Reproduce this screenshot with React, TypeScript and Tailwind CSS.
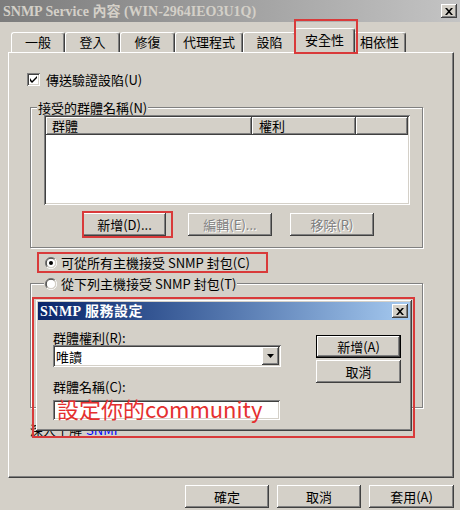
import React from "react";

const raised =
  "shadow-[inset_-1px_-1px_#404040,inset_1px_1px_#ffffff,inset_-2px_-2px_#808080,inset_2px_2px_#d4d0c8]";
const sunken =
  "shadow-[inset_1px_1px_#808080,inset_-1px_-1px_#ffffff,inset_2px_2px_#404040,inset_-2px_-2px_#d4d0c8]";

function Btn({
  children,
  className = "",
  disabled = false,
  isDefault = false,
}: {
  children: React.ReactNode;
  className?: string;
  disabled?: boolean;
  isDefault?: boolean;
}) {
  return (
    <div
      className={`flex items-center justify-center bg-[#d4d0c8] ${
        isDefault
          ? "border border-black shadow-[inset_-1px_-1px_#404040,inset_1px_1px_#ffffff,inset_-2px_-2px_#808080,inset_2px_2px_#d4d0c8]"
          : raised
      } ${disabled ? "text-[#808080] [text-shadow:1px_1px_#ffffff]" : "text-black"} ${className}`}
    >
      {children}
    </div>
  );
}

function Tab({ label, w, selected = false }: { label: string; w: string; selected?: boolean }) {
  if (selected) {
    return (
      <div
        className={`relative z-10 -mx-[2px] -mb-[1px] flex h-[25px] items-start justify-center rounded-t-[3px] border-l border-t border-r border-l-white border-t-white border-r-[#404040] bg-[#d4d0c8] pt-[3px] shadow-[inset_-1px_0_#808080] ${w}`}
      >
        {label}
      </div>
    );
  }
  return (
    <div
      className={`flex h-[20px] items-start justify-center rounded-t-[3px] border-l border-t border-r border-l-white border-t-white border-r-[#404040] pt-[1px] shadow-[inset_-1px_0_#808080] ${w}`}
    >
      {label}
    </div>
  );
}

function Radio({ checked }: { checked: boolean }) {
  return (
    <svg width="12" height="12" viewBox="0 0 12 12" className="shrink-0">
      <path d="M10 2 A5.5 5.5 0 0 0 2 10" stroke="#808080" fill="none" />
      <path d="M9.4 2.6 A4.5 4.5 0 0 0 2.6 9.4" stroke="#404040" fill="none" />
      <circle cx="6" cy="6" r="4" fill="#ffffff" />
      <path d="M2 10 A5.5 5.5 0 0 0 10 2" stroke="#ffffff" fill="none" />
      <path d="M2.6 9.4 A4.5 4.5 0 0 0 9.4 2.6" stroke="#d4d0c8" fill="none" />
      {checked && <circle cx="6" cy="6" r="2" fill="#000000" />}
    </svg>
  );
}

function CloseX() {
  return (
    <svg width="8" height="7" viewBox="0 0 8 7">
      <path d="M0 0h2l2 2.2L6 0h2L5 3.5 8 7H6L4 4.8 2 7H0l3-3.5z" fill="#000" />
    </svg>
  );
}

export default function App() {
  return (
    <div
      className="relative h-[510px] w-[460px] overflow-hidden bg-[#d4d0c8] text-[13px] leading-[15px] text-black"
      style={{ fontFamily: '"Noto Sans CJK TC", "Noto Sans", sans-serif' }}
    >
      {/* Title bar */}
      <div className="flex h-[22px] items-center justify-between bg-gradient-to-r from-[#7c7c7c] to-[#c4c4c4] pl-[3px] pr-[3px]">
        <span
          className="text-[14px] font-bold text-[#d4d0c8]"
          style={{ fontFamily: '"Liberation Serif", "Noto Sans CJK TC", serif' }}
        >
          SNMP Service 內容 (WIN-2964IEO3U1Q)
        </span>
        <div className={`flex h-[14px] w-[16px] items-center justify-center bg-[#d4d0c8] ${raised}`}>
          <CloseX />
        </div>
      </div>

      {/* Tabs */}
      <div className="mt-[6px] flex h-[24px] items-end pl-[11px]">
        <Tab label="一般" w="w-[54px]" />
        <Tab label="登入" w="w-[55px]" />
        <Tab label="修復" w="w-[55px]" />
        <Tab label="代理程式" w="w-[68px]" />
        <Tab label="設陷" w="w-[53px]" />
        <Tab label="安全性" w="w-[61px]" selected />
        <Tab label="相依性" w="w-[53px]" />
      </div>

      {/* Panel */}
      <div className="ml-[8px] h-[426px] w-[446px] border-b border-l border-r border-t border-b-[#404040] border-l-white border-r-[#404040] border-t-white shadow-[inset_-1px_-1px_#808080]">
        {/* checkbox */}
        <div className="ml-[18px] mt-[19px] flex h-[15px] items-center gap-[6px]">
          <div className={`flex h-[13px] w-[13px] items-center justify-center bg-white ${sunken}`}>
            <svg width="7" height="7" viewBox="0 0 7 7">
              <path d="M0 2v3l2 2 5-5V-0L2 5z" fill="#000" />
            </svg>
          </div>
          <span>傳送驗證設陷(U)</span>
        </div>

        {/* Group 1 */}
        <div className="ml-[21px] mt-[20px] h-[141px] w-[393px] border border-[#808080] shadow-[inset_1px_1px_#ffffff,1px_1px_#ffffff]">
          <div className="-mt-[8px] ml-[6px] w-fit bg-[#d4d0c8] px-[1px]">接受的群體名稱(N)</div>
          <div className={`ml-[13px] flex h-[90px] w-[366px] flex-col bg-white p-[2px] ${sunken}`}>
            <div className="flex h-[18px] bg-[#d4d0c8]">
              <div className={`h-full w-[206px] pl-[6px] pt-[1px] ${raised}`}>群體</div>
              <div className={`h-full w-[104px] pl-[7px] pt-[1px] ${raised}`}>權利</div>
              <div className={`h-full flex-1 ${raised}`}></div>
            </div>
          </div>
          <div className="mt-[8px] flex h-[23px]">
            <Btn className="ml-[52px] w-[83px]">新增(D)...</Btn>
            <Btn className="ml-[22px] w-[84px]" disabled>
              編輯(E)...
            </Btn>
            <Btn className="ml-[18px] w-[84px]" disabled>
              移除(R)
            </Btn>
          </div>
        </div>

        {/* radio 1 */}
        <div className="ml-[36px] mt-[7px] flex h-[15px] items-center gap-[4px]">
          <Radio checked />
          <span>可從所有主機接受 SNMP 封包(C)</span>
        </div>

        {/* Group 2 */}
        <div className="ml-[21px] mt-[13px] h-[125px] w-[393px] border border-[#808080] shadow-[inset_1px_1px_#ffffff,1px_1px_#ffffff]">
          <div className="-mt-[8px] ml-[13px] flex w-fit items-center gap-[4px] bg-[#d4d0c8] px-[1px]">
            <Radio checked={false} />
            <span>從下列主機接受 SNMP 封包(T)</span>
          </div>
        </div>

        <div className="ml-[21px] mt-[14px] flex gap-[4px]">
          <span>深入了解</span>
          <span className="text-[#0000ff] underline">SNMP</span>
        </div>
      </div>

      {/* Bottom buttons */}
      <div className="mt-[7px] flex justify-end gap-[8px] pr-[6px]">
        <Btn className="h-[23px] w-[84px]">確定</Btn>
        <Btn className="h-[23px] w-[84px]">取消</Btn>
        <Btn className="h-[23px] w-[85px]">套用(A)</Btn>
      </div>

      {/* Overlaid dialog */}
      <div
        className={`absolute left-[36px] top-[300px] z-20 flex h-[131px] w-[376px] flex-col bg-[#d4d0c8] ${raised}`}
      >
        <div className="mx-[2px] mt-[2px] flex h-[18px] items-center justify-between bg-gradient-to-r from-[#0a246a] to-[#a6caf0] pl-[2px] pr-[2px]">
          <span
            className="text-[14px] font-bold tracking-[0.5px] text-white"
            style={{ fontFamily: '"Liberation Serif", "Noto Sans CJK TC", serif' }}
          >
            SNMP 服務設定
          </span>
          <div className={`flex h-[14px] w-[16px] items-center justify-center bg-[#d4d0c8] ${raised}`}>
            <CloseX />
          </div>
        </div>
        <div className="flex">
          <div className="ml-[17px] flex w-[229px] flex-col">
            <div className="mt-[10px] h-[15px]">群體權利(R):</div>
            <div className={`flex h-[22px] w-[228px] items-center bg-white p-[2px] ${sunken}`}>
              <span className="flex-1 pl-[1px]">唯讀</span>
              <div className={`flex h-[18px] w-[17px] items-center justify-center bg-[#d4d0c8] ${raised}`}>
                <svg width="7" height="4" viewBox="0 0 7 4">
                  <path d="M0 0h7L3.5 4z" fill="#000" />
                </svg>
              </div>
            </div>
            <div className="mt-[12px] h-[15px]">群體名稱(C):</div>
            <div className={`mt-[6px] h-[20px] w-[227px] bg-white ${sunken}`}></div>
          </div>
          <div className="ml-[34px] mt-[15px] flex flex-col gap-[2px]">
            <Btn className="h-[23px] w-[85px]" isDefault>
              新增(A)
            </Btn>
            <Btn className="h-[23px] w-[85px]">取消</Btn>
          </div>
        </div>
      </div>

      {/* Red annotation text */}
      <div className="absolute left-[57px] top-[395px] z-30 text-[22px] leading-[26px] text-[#e53030]">
        設定你的community
      </div>

      {/* Red annotation boxes */}
      <div className="absolute left-[294px] top-[19px] z-30 h-[35px] w-[64px] border-2 border-[#d93a3a]"></div>
      <div className="absolute left-[82px] top-[211px] z-30 h-[27px] w-[91px] border-2 border-[#d93a3a]"></div>
      <div className="absolute left-[37px] top-[252px] z-30 h-[21px] w-[231px] border-2 border-[#d93a3a]"></div>
      <div className="absolute left-[32px] top-[297px] z-30 h-[141px] w-[383px] border-2 border-[#d93a3a]"></div>
    </div>
  );
}
